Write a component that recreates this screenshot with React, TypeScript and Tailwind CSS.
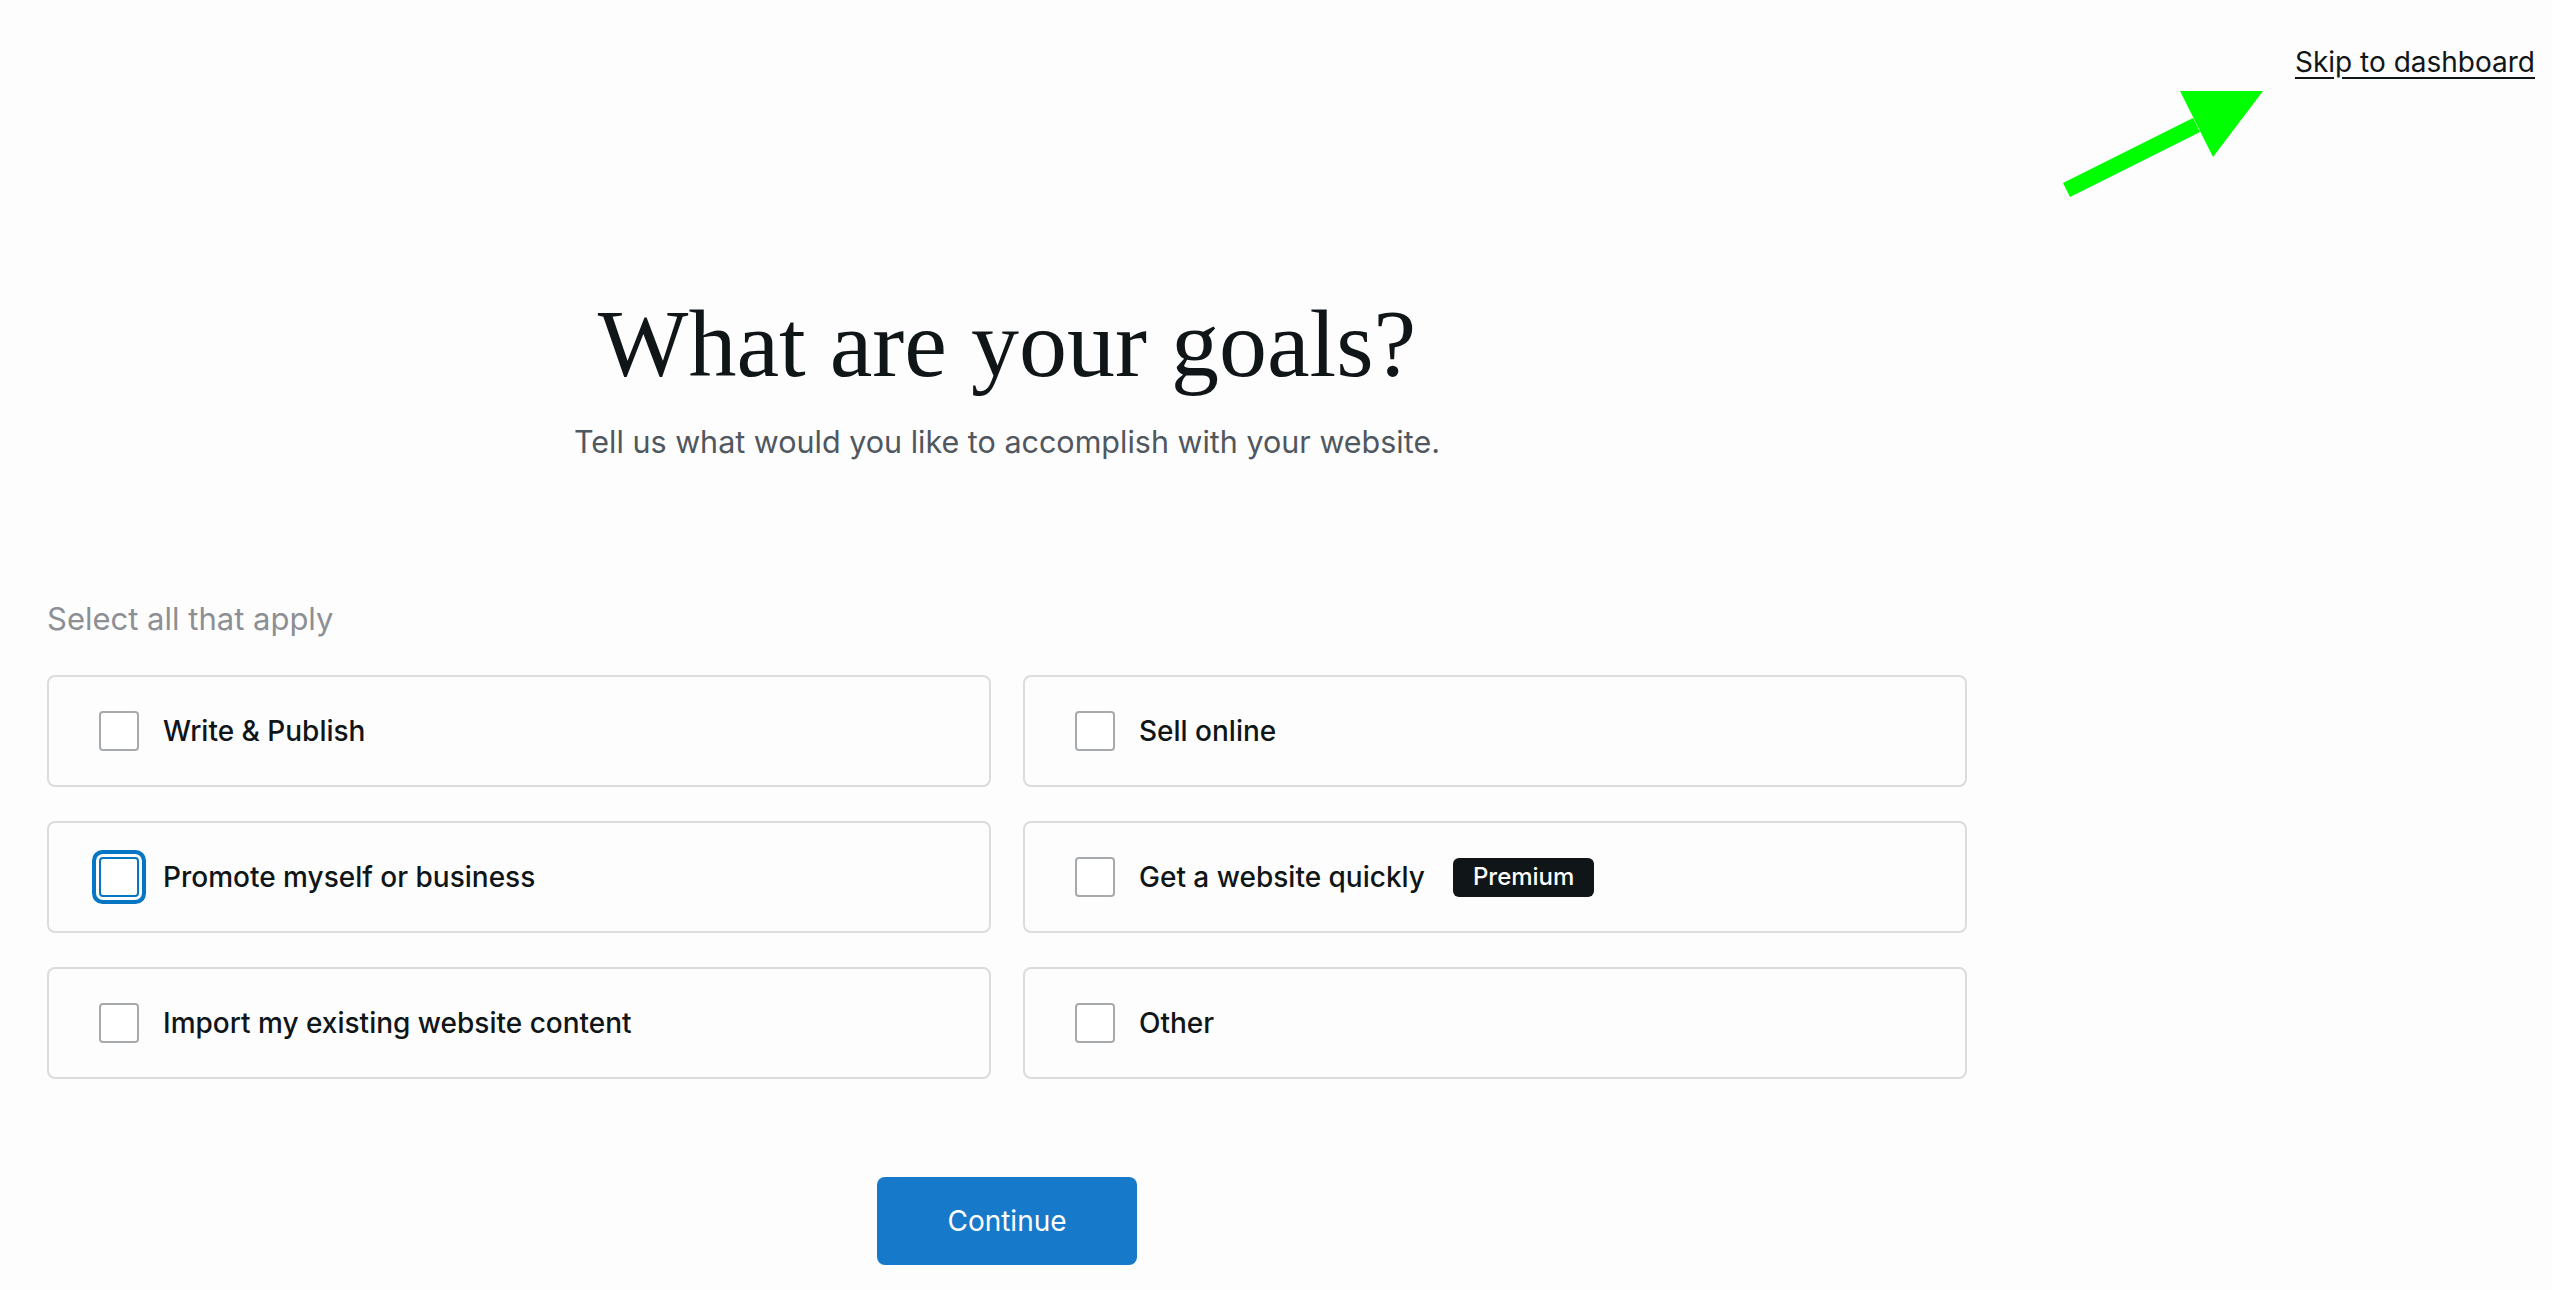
import { useState } from "react";

const goals = [
  { id: "write", label: "Write & Publish" },
  { id: "sell", label: "Sell online" },
  { id: "promote", label: "Promote myself or business" },
  { id: "quick", label: "Get a website quickly", premium: true },
  { id: "import", label: "Import my existing website content" },
  { id: "other", label: "Other" },
];

function GoalCard({
  label,
  premium,
  focused,
  checked,
  onToggle,
}: {
  label: string;
  premium?: boolean;
  focused?: boolean;
  checked: boolean;
  onToggle: () => void;
}) {
  return (
    <label className="flex h-[112px] cursor-pointer items-center rounded-[8px] border-2 border-[#dcdcde] bg-[#fdfdfd] pl-[50px]">
      <span
        onClick={(e) => {
          e.preventDefault();
          onToggle();
        }}
        className={
          focused
            ? "h-[40px] w-[40px] shrink-0 rounded-[4px] border-2 border-[#0675c4] bg-white shadow-[0_0_0_3px_#fdfdfd,0_0_0_7px_#0675c4]"
            : "h-[40px] w-[40px] shrink-0 rounded-[4px] border-2 border-[#a7aaad] bg-white"
        }
      >
        {checked && (
          <svg viewBox="0 0 24 24" className="h-full w-full" fill="none" stroke="#101517" strokeWidth="2.5">
            <path d="M5 12.5l4.5 4.5L19 7.5" />
          </svg>
        )}
      </span>
      <span className="ml-[24px] text-[28px] font-medium leading-[34px] text-[#101517]">
        {label}
      </span>
      {premium && (
        <span className="ml-[28px] flex h-[39px] items-center rounded-[6px] bg-[#101517] px-[20px] text-[24px] font-medium text-white">
          Premium
        </span>
      )}
    </label>
  );
}

export default function App() {
  const [selected, setSelected] = useState<Set<string>>(new Set());

  function toggle(id: string) {
    setSelected((prev) => {
      const next = new Set(prev);
      if (next.has(id)) next.delete(id);
      else next.add(id);
      return next;
    });
  }

  return (
    <div className="relative min-h-[1290px] w-full bg-[#fdfdfd] font-['Inter',sans-serif]">
      <div className="flex justify-end pr-[17px] pt-[41px]">
        <a href="#" className="text-[28px] leading-[42px] text-[#101517] underline underline-offset-[5px]">
          Skip to dashboard
        </a>
      </div>

      {/* green annotation arrow */}
      <svg className="absolute left-[2055px] top-[85px]" width="215" height="120" viewBox="2055 85 215 120">
        <polygon points="2063,183 2193,118 2200,132 2070,197" fill="#00ff00" />
        <polygon points="2180,91 2263,91 2213,157" fill="#00ff00" />
      </svg>

      <main className="ml-[47px] w-[1920px]">
        <div className="mt-[208px] flex flex-col items-center text-center">
          <h1 className="font-['Liberation_Serif',serif] text-[96px] font-normal leading-[106px] text-[#101517]">
            What are your goals?
          </h1>
          <p className="mt-[27px] text-[30.5px] leading-[36px] text-[#50575e]">
            Tell us what would you like to accomplish with your website.
          </p>
        </div>

        <p className="mt-[140px] text-[31px] leading-[38px] text-[#8c8f94]">Select all that apply</p>

        <div className="mt-[37px] grid grid-cols-2 gap-x-[32px] gap-y-[34px]">
          {goals.map((g) => (
            <GoalCard
              key={g.id}
              label={g.label}
              premium={g.premium}
              focused={g.id === "promote"}
              checked={selected.has(g.id)}
              onToggle={() => toggle(g.id)}
            />
          ))}
        </div>

        <div className="mt-[98px] flex justify-center">
          <button className="h-[88px] w-[260px] rounded-[8px] bg-[#1779c9] text-[28px] text-white">
            Continue
          </button>
        </div>
      </main>
    </div>
  );
}
